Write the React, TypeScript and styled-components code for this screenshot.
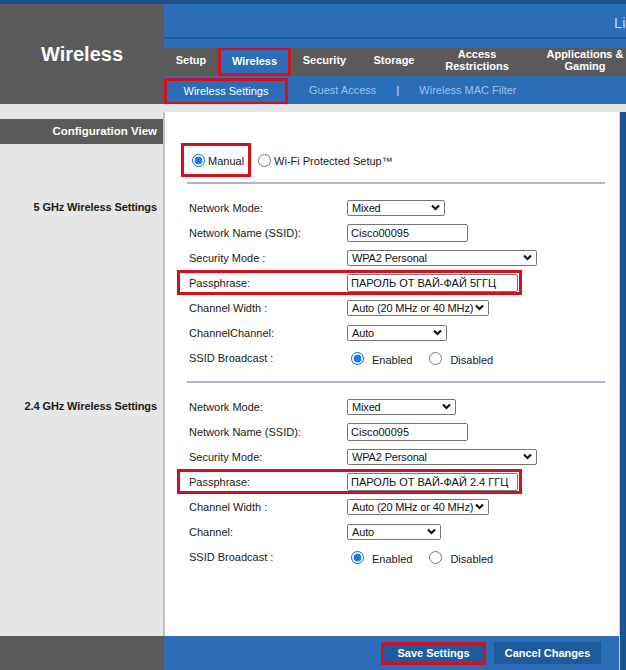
import React from "react"
import styled, { createGlobalStyle } from "styled-components"

const colors = {
	blue: "#2b6db6",
	blueLine: "#215b9e",
	button: "#1f5b9c",
	edge: "#1d5390",
	topStrip: "#1c4f8c",
	gray: "#5a5a5a",
	side: "#e6e6e6",
	red: "#d3111d",
	link: "#9cc0f4",
	text: "#1a1a1a",
	rule: "#b3b5c6",
}

const GlobalStyle = createGlobalStyle`
	html, body {
		margin: 0;
		padding: 0;
		background: #fff;
	}

	body {
		font-family: "Liberation Sans", Arial, sans-serif;
	}

	*, *::before, *::after {
		box-sizing: border-box;
	}
`

type Control =
	| { kind: "select", value: string, width: number }
	| { kind: "input", value: string, width: number }
	| { kind: "radios" }

type FieldRow = {
	label: string,
	control: Control,
	highlight?: boolean,
}

const SECTION_5: FieldRow[] = [
	{ label: "Network Mode:", control: { kind: "select", value: "Mixed", width: 98 } },
	{ label: "Network Name (SSID):", control: { kind: "input", value: "Cisco00095", width: 121 } },
	{ label: "Security Mode :", control: { kind: "select", value: "WPA2 Personal", width: 190 } },
	{ label: "Passphrase:", control: { kind: "input", value: "ПАРОЛЬ ОТ ВАЙ-ФАЙ 5ГГЦ", width: 171 }, highlight: true },
	{ label: "Channel Width :", control: { kind: "select", value: "Auto (20 MHz or 40 MHz)", width: 142 } },
	{ label: "ChannelChannel:", control: { kind: "select", value: "Auto", width: 100 } },
	{ label: "SSID Broadcast :", control: { kind: "radios" } },
]

const SECTION_24: FieldRow[] = [
	{ label: "Network Mode:", control: { kind: "select", value: "Mixed", width: 109 } },
	{ label: "Network Name (SSID):", control: { kind: "input", value: "Cisco00095", width: 121 } },
	{ label: "Security Mode:", control: { kind: "select", value: "WPA2 Personal", width: 190 } },
	{ label: "Passphrase:", control: { kind: "input", value: "ПАРОЛЬ ОТ ВАЙ-ФАЙ 2.4 ГГЦ", width: 171 }, highlight: true },
	{ label: "Channel Width :", control: { kind: "select", value: "Auto (20 MHz or 40 MHz)", width: 142 } },
	{ label: "Channel:", control: { kind: "select", value: "Auto", width: 94 } },
	{ label: "SSID Broadcast :", control: { kind: "radios" } },
]

const TABS = [
	{ text: "Setup", width: 54 },
	{ text: "Wireless", width: 73, active: true },
	{ text: "Security", width: 67 },
	{ text: "Storage", width: 72 },
	{ text: "Access\nRestrictions", width: 94 },
	{ text: "Applications &\nGaming", width: 122 },
]

const PageElement = styled.div`
	width: 626px;
	height: 670px;
	display: flex;
	flex-direction: column;
	overflow: hidden;
	background: ${colors.side};
`

const TopStripElement = styled.div`
	height: 4px;
	flex-shrink: 0;
	background: ${colors.topStrip};
`

const HeaderElement = styled.header`
	display: grid;
	grid-template-columns: 164px 1fr;
	height: 100px;
	flex-shrink: 0;
`

const HeaderTitleElement = styled.div`
	display: flex;
	align-items: center;
	justify-content: center;
	background: ${colors.gray};
	color: #fff;
	font-size: 20px;
	font-weight: 700;
`

const HeaderMainElement = styled.div`
	display: flex;
	flex-direction: column;
	min-width: 0;
`

const BrandBandElement = styled.div`
	height: 44px;
	display: flex;
	justify-content: flex-end;
	align-items: flex-start;
	padding-top: 11px;
	background: linear-gradient(to bottom, ${colors.blue} 0 33px, ${colors.blueLine} 33px 35px, ${colors.blue} 35px);
`

const BrandElement = styled.span`
	width: 12px;
	overflow: hidden;
	white-space: nowrap;
	font-size: 15px;
	line-height: 1;
	color: #b8dcff;
`

const NavRowElement = styled.nav`
	height: 28px;
	display: flex;
	background: ${colors.gray};
	overflow: hidden;
`

const TabElement = styled.div<{ $width: number, $active?: boolean }>`
	width: ${props => props.$width}px;
	flex-shrink: 0;
	display: flex;
	align-items: center;
	justify-content: center;
	padding-bottom: 4px;
	text-align: center;
	white-space: pre-line;
	font-size: 11px;
	font-weight: 700;
	line-height: 12px;
	color: #fff;

	${props => props.$active ? `
		background: ${colors.blue};
		border: 3px solid ${colors.red};
		margin-top: -1px;
		padding-bottom: 2px;
	` : ""}
`

const SubNavRowElement = styled.div`
	height: 28px;
	display: flex;
	align-items: center;
	gap: 20px;
	background: ${colors.blue};
	font-size: 11px;
`

const SubTabElement = styled.div<{ $active?: boolean }>`
	color: ${props => props.$active ? "#fff" : colors.link};

	${props => props.$active ? `
		align-self: flex-start;
		width: 124px;
		height: 27px;
		margin-top: 2px;
		margin-right: 1px;
		padding-bottom: 2px;
		display: flex;
		align-items: center;
		justify-content: center;
		border: 3px solid ${colors.red};
	` : ""}
`

const SubNavDividerElement = styled.span`
	color: ${colors.link};
	font-weight: 700;
`

const GapStripElement = styled.div`
	height: 8px;
	flex-shrink: 0;
	background: ${colors.side};
`

const LowerElement = styled.div`
	flex: 1;
	display: flex;
	min-height: 0;
`

const LowerMainElement = styled.div`
	flex: 1;
	display: flex;
	flex-direction: column;
`

const EdgeStripElement = styled.div`
	width: 7px;
	flex-shrink: 0;
	background: ${colors.edge};
	border-left: 1px solid #c9cfd8;
`

const BodyElement = styled.main`
	flex: 1;
	display: grid;
	grid-template-columns: 163px 1fr;
	grid-template-rows: 70px 199px 1fr;
`

const SideCellElement = styled.div<{ $top: number }>`
	padding-top: ${props => props.$top}px;
	background: ${colors.side};
`

const ConfigBarElement = styled.div`
	height: 25px;
	padding-right: 6px;
	background: ${colors.gray};
	color: #fff;
	font-size: 11.5px;
	font-weight: 700;
	line-height: 25px;
	text-align: right;
`

const SectionTitleElement = styled.div`
	padding-right: 6px;
	font-size: 11px;
	font-weight: 700;
	line-height: 25px;
	text-align: right;
	letter-spacing: -0.1px;
	color: ${colors.text};
`

const PanelCellElement = styled.div`
	background: #fff;
	border-left: 2px solid #c2c2c2;
`

const ModeRowElement = styled.div`
	display: flex;
	align-items: center;
	padding: 31px 0 0 16px;
	font-size: 11px;
	color: ${colors.text};
`

const ManualBoxElement = styled.label`
	height: 34px;
	display: flex;
	align-items: center;
	gap: 3px;
	padding: 2px 4px 0 8px;
	margin-right: 7px;
	border: 3px solid ${colors.red};
`

const RadioLabelElement = styled.label`
	display: flex;
	align-items: center;
	gap: 3px;
	padding-top: 2px;
`

const RadioDotElement = styled.span<{ $checked?: boolean }>`
	width: 13px;
	height: 13px;
	flex-shrink: 0;
	border-radius: 50%;
	border: 1px solid ${props => props.$checked ? "#0a63d6" : "#777"};
	background: ${props => props.$checked
		? "radial-gradient(circle, #1b7bee 0 3.6px, #fff 4.2px)"
		: "#fff"};
	margin-top: -2px;
`

const RuleElement = styled.div`
	height: 2px;
	margin: 0 14px 0 22px;
	background: ${colors.rule};
`

const RowsElement = styled.div`
	padding: 11px 0 0 24px;
`

const RowElement = styled.div<{ $highlight?: boolean }>`
	position: relative;
	height: 25px;
	display: grid;
	grid-template-columns: 158px auto;
	align-items: center;
	font-size: 11px;
	color: ${colors.text};

	${props => props.$highlight ? `
		&::after {
			content: "";
			position: absolute;
			left: -12px;
			top: 0;
			width: 345px;
			height: 25px;
			border: 3px solid ${colors.red};
			pointer-events: none;
		}
	` : ""}
`

const SelectElement = styled.div<{ $width: number }>`
	width: ${props => props.$width}px;
	height: 16px;
	display: flex;
	align-items: center;
	padding: 0 2px 0 4px;
	border: 1px solid #767676;
	border-radius: 2px;
	background: #fff;
	font-size: 11px;
	letter-spacing: -0.15px;
	color: #111;
	white-space: nowrap;

	span {
		flex: 1;
		min-width: 0;
	}

	svg {
		flex-shrink: 0;
		margin-right: 2px;
	}
`

const InputElement = styled.input<{ $width: number }>`
	width: ${props => props.$width}px;
	height: 18px;
	padding: 0 3px;
	border: 1px solid #767676;
	border-radius: 2px;
	background: #fff;
	font-family: "Liberation Sans", Arial, sans-serif;
	font-size: 11px;
	color: #111;
	outline: none;
`

const BroadcastElement = styled.div`
	display: flex;
	align-items: center;
	gap: 17px;
	padding: 4px 0 0 4px;
	font-size: 11px;
`

const BroadcastOptionElement = styled.label`
	display: flex;
	align-items: center;
	gap: 8px;
`

const FooterElement = styled.footer`
	height: 34px;
	flex-shrink: 0;
	display: grid;
	grid-template-columns: 164px 1fr;
`

const FooterSideElement = styled.div`
	background: ${colors.gray};
`

const FooterBarElement = styled.div`
	display: flex;
	align-items: center;
	justify-content: flex-end;
	gap: 8px;
	padding-right: 18px;
	background: ${colors.blue};
`

const ButtonElement = styled.button<{ $width: number, $highlight?: boolean }>`
	width: ${props => props.$width}px;
	height: ${props => props.$highlight ? 23 : 22}px;
	padding: 0;
	border: ${props => props.$highlight ? `3px solid ${colors.red}` : "none"};
	background: ${colors.button};
	color: #fff;
	font-family: "Liberation Sans", Arial, sans-serif;
	font-size: 11px;
	font-weight: 700;
`

function Chevron() {
	return (
		<svg width="9" height="7" viewBox="0 0 9 7">
			<path d="M1 1.4 L4.5 5 L8 1.4" fill="none" stroke="#111" strokeWidth="2.1" />
		</svg>
	)
}

function FieldControl(props: { control: Control }) {
	const control = props.control
	if (control.kind === "select") {
		return (
			<SelectElement $width={control.width}>
				<span>{control.value}</span>
				<Chevron />
			</SelectElement>
		)
	}
	if (control.kind === "input") {
		return <InputElement $width={control.width} value={control.value} readOnly />
	}
	return (
		<BroadcastElement>
			<BroadcastOptionElement>
				<RadioDotElement $checked />
				Enabled
			</BroadcastOptionElement>
			<BroadcastOptionElement>
				<RadioDotElement />
				Disabled
			</BroadcastOptionElement>
		</BroadcastElement>
	)
}

function WirelessSection(props: { rows: FieldRow[] }) {
	return (
		<PanelCellElement>
			<RuleElement />
			<RowsElement>
				{props.rows.map(row => (
					<RowElement key={row.label} $highlight={row.highlight}>
						<span>{row.label}</span>
						<div>
							<FieldControl control={row.control} />
						</div>
					</RowElement>
				))}
			</RowsElement>
		</PanelCellElement>
	)
}

function App() {
	return (
		<PageElement>
			<GlobalStyle />
			<TopStripElement />

			<HeaderElement>
				<HeaderTitleElement>Wireless</HeaderTitleElement>
				<HeaderMainElement>
					<BrandBandElement>
						<BrandElement>Linksys</BrandElement>
					</BrandBandElement>
					<NavRowElement>
						{TABS.map(tab => (
							<TabElement key={tab.text} $width={tab.width} $active={tab.active}>
								{tab.text}
							</TabElement>
						))}
					</NavRowElement>
					<SubNavRowElement>
						<SubTabElement $active>Wireless Settings</SubTabElement>
						<SubTabElement>Guest Access</SubTabElement>
						<SubNavDividerElement>|</SubNavDividerElement>
						<SubTabElement>Wireless MAC Filter</SubTabElement>
					</SubNavRowElement>
				</HeaderMainElement>
			</HeaderElement>

			<GapStripElement />

			<LowerElement>
				<LowerMainElement>
					<BodyElement>
						<SideCellElement $top={7}>
							<ConfigBarElement>Configuration View</ConfigBarElement>
						</SideCellElement>
						<PanelCellElement>
							<ModeRowElement>
								<ManualBoxElement>
									<RadioDotElement $checked />
									Manual
								</ManualBoxElement>
								<RadioLabelElement>
									<RadioDotElement />
									Wi-Fi Protected Setup™
								</RadioLabelElement>
							</ModeRowElement>
						</PanelCellElement>

						<SideCellElement $top={13}>
							<SectionTitleElement>5 GHz Wireless Settings</SectionTitleElement>
						</SideCellElement>
						<WirelessSection rows={SECTION_5} />

						<SideCellElement $top={13}>
							<SectionTitleElement>2.4 GHz Wireless Settings</SectionTitleElement>
						</SideCellElement>
						<WirelessSection rows={SECTION_24} />
					</BodyElement>

					<FooterElement>
						<FooterSideElement />
						<FooterBarElement>
							<ButtonElement $width={105} $highlight>Save Settings</ButtonElement>
							<ButtonElement $width={107}>Cancel Changes</ButtonElement>
						</FooterBarElement>
					</FooterElement>
				</LowerMainElement>
				<EdgeStripElement />
			</LowerElement>
		</PageElement>
	)
}

export default App
